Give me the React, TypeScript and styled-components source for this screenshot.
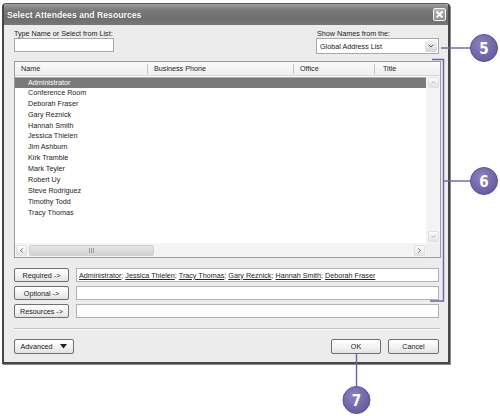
import styled, { createGlobalStyle } from 'styled-components'
import { ChevronDown, ChevronUp, ChevronLeft, ChevronRight } from 'lucide-react'

const GlobalStyle = createGlobalStyle`
  html, body { margin: 0; padding: 0; background: #fff; }
  body { font-family: "Liberation Sans", Arial, sans-serif; color: #222; }
  * { box-sizing: border-box; }
`

const Page = styled.div`
  position: relative;
  width: 500px;
  height: 416px;
  padding: 3px 0 0 2px;
`

const Window = styled.div`
  width: 448px;
  height: 361px;
  border: 2px solid #474747;
  border-top: 1px solid #5c5c5c;
  border-radius: 4px 4px 0 0;
  background: #ececec;
  display: flex;
  flex-direction: column;
  box-shadow: 1px 1px 0 #8a8a8a;
`

const TitleBar = styled.div`
  height: 21px;
  flex: none;
  display: flex;
  align-items: center;
  justify-content: space-between;
  padding: 0 2px 0 3px;
  background: linear-gradient(#9c9c9c, #7a7a7a 30%, #6e6e6e 70%, #777);
  border-radius: 3px 3px 0 0;
`

const Title = styled.span`
  color: #fff;
  font-weight: bold;
  font-size: 8.6px;
  letter-spacing: 0.05px;
  text-shadow: 0 0 1px rgba(0, 0, 0, 0.4);
`

const CloseBox = styled.div`
  width: 13px;
  height: 13px;
  border: 1px solid #f2f2f2;
  border-radius: 2px;
  background: linear-gradient(#b4b4b4, #8e8e8e);
  display: flex;
  align-items: center;
  justify-content: center;
`

const Body = styled.div`
  flex: 1;
  display: flex;
  flex-direction: column;
  padding: 0 7px 0 10px;
`

const TopRow = styled.div`
  margin-top: 4px;
  display: flex;
  justify-content: space-between;
`

const Field = styled.div<{ $width: number; $right?: number }>`
  width: ${p => p.$width}px;
  margin-right: ${p => p.$right ?? 0}px;
  display: flex;
  flex-direction: column;
`

const Label = styled.span<{ $indent?: number }>`
  font-size: 7.2px;
  line-height: 9px;
  padding-left: ${p => p.$indent ?? 0}px;
`

const TextBox = styled.div<{ $height: number }>`
  height: ${p => p.$height}px;
  background: #fff;
  border: 1px solid #a8a8a8;
  display: flex;
  align-items: center;
  padding-left: 3px;
  font-size: 7.2px;
`

const Combo = styled(TextBox)`
  justify-content: space-between;
  padding-right: 1px;
`

const ComboButton = styled.div`
  width: 12px;
  height: 12px;
  border-radius: 2px;
  background: linear-gradient(#f4f4f4, #d6d6d6);
  display: flex;
  align-items: center;
  justify-content: center;
`

const ListBox = styled.div`
  margin-top: 7px;
  height: 197px;
  border: 1px solid #9c9c9c;
  background: #fff;
  display: flex;
  flex-direction: column;
`

const Header = styled.div`
  height: 14px;
  flex: none;
  display: grid;
  grid-template-columns: 133px 146px 81px 1fr;
  align-items: center;
  background: linear-gradient(#fafafa, #f0f0f0);
  border-bottom: 1px solid #d6d6d6;
`

const HeaderCell = styled.div<{ $last?: boolean }>`
  height: 10px;
  line-height: 10px;
  font-size: 7.2px;
  padding-left: ${p => (p.$last ? 8 : 6)}px;
  border-right: ${p => (p.$last ? 'none' : '1px solid #c4c4c4')};
`

const ListArea = styled.div`
  flex: 1;
  display: grid;
  grid-template-columns: 1fr 14px;
  grid-template-rows: 1fr 14px;
`

const Rows = styled.div`
  padding-top: 1px;
  overflow: hidden;
`

const Row = styled.div<{ $selected?: boolean }>`
  height: 10.9px;
  line-height: 10.9px;
  font-size: 7.2px;
  padding-left: 13px;
  color: ${p => (p.$selected ? '#fff' : '#1c1c1c')};
  background: ${p => (p.$selected ? '#7a7a7a' : 'transparent')};
  border-top: ${p => (p.$selected ? '1px solid #aaa' : 'none')};
`

const VScroll = styled.div`
  background: #f4f4f4;
  display: flex;
  flex-direction: column;
  justify-content: space-between;
  padding: 1px 0;
`

const HScroll = styled.div`
  background: #f4f4f4;
  display: flex;
  align-items: center;
  padding: 0 1px;
  gap: 2px;
`

const ArrowBtn = styled.div`
  width: 11px;
  height: 11px;
  margin: 0 auto;
  flex: none;
  border-radius: 2px;
  background: linear-gradient(#fbfbfb, #e4e4e4);
  border: 1px solid #e0e0e0;
  display: flex;
  align-items: center;
  justify-content: center;
`

const Thumb = styled.div<{ $width: number }>`
  width: ${p => p.$width}px;
  height: 11px;
  border-radius: 2px;
  background: linear-gradient(#e6e6e6, #d2d2d2);
  border: 1px solid #d0d0d0;
  display: flex;
  align-items: center;
  justify-content: center;
`

const Spacer = styled.div`
  flex: 1;
`

const Corner = styled.div`
  background: #efefef;
`

const Recipients = styled.div`
  margin-top: 10px;
  display: flex;
  flex-direction: column;
  gap: 4px;
`

const RecipientRow = styled.div`
  display: flex;
  gap: 7px;
  height: 14px;
  padding-right: 2px;
`

const Button = styled.div<{ $width: number }>`
  width: ${p => p.$width}px;
  height: 100%;
  flex: none;
  border: 1px solid #6f6f6f;
  border-radius: 2px;
  background: linear-gradient(#ffffff, #f1f1f1 60%, #e2e2e2);
  font-size: 7.2px;
  display: flex;
  align-items: center;
  justify-content: center;
  gap: 8px;
  color: #222;
`

const RecipientField = styled.div`
  flex: 1;
  background: #fff;
  border: 1px solid #b0b0b0;
  font-size: 7.2px;
  display: flex;
  align-items: center;
  padding-left: 2px;
  white-space: pre;
`

const Name = styled.span`
  text-decoration: underline;
`

const Separator = styled.div`
  margin-top: 10px;
  margin-right: 1px;
  height: 2px;
  border-top: 1px solid #c2c2c2;
  border-bottom: 1px solid #fbfbfb;
`

const Footer = styled.div`
  margin-top: 9px;
  height: 15px;
  display: flex;
  gap: 7px;
  padding-right: 2px;
`

const Callouts = styled.svg`
  position: absolute;
  left: 0;
  top: 0;
  pointer-events: none;
`

const people = [
  'Administrator',
  'Conference Room',
  'Deborah Fraser',
  'Gary Reznick',
  'Hannah Smith',
  'Jessica Thielen',
  'Jim Ashburn',
  'Kirk Tramble',
  'Mark Teyler',
  'Robert Uy',
  'Steve Rodriguez',
  'Timothy Todd',
  'Tracy Thomas',
]

const required = ['Administrator', 'Jessica Thielen', 'Tracy Thomas', 'Gary Reznick', 'Hannah Smith', 'Deborah Fraser']

const Bubble = ({ x, y, n }: { x: number; y: number; n: string }) => (
  <g>
    <circle cx={x} cy={y} r={13.5} fill="url(#bubble)" stroke="#5b5296" strokeWidth={1} />
    <text
      x={x}
      y={y + 5.5}
      textAnchor="middle"
      fill="#fff"
      fontSize="15"
      fontWeight="bold"
      fontFamily='"DejaVu Sans Condensed", "Liberation Sans Narrow", sans-serif'
    >
      {n}
    </text>
  </g>
)

export default function App() {
  return (
    <Page>
      <GlobalStyle />
      <Window>
        <TitleBar>
          <Title>Select Attendees and Resources</Title>
          <CloseBox>
            <svg width="9" height="9" viewBox="0 0 9 9">
              <path d="M1.5 1.5 L7.5 7.5 M7.5 1.5 L1.5 7.5" stroke="#fff" strokeWidth="1.8" />
            </svg>
          </CloseBox>
        </TitleBar>
        <Body>
          <TopRow>
            <Field $width={100}>
              <Label>Type Name or Select from List:</Label>
              <TextBox $height={14} />
            </Field>
            <Field $width={123} $right={2}>
              <Label $indent={1}>Show Names from the:</Label>
              <Combo $height={16}>
                Global Address List
                <ComboButton>
                  <ChevronDown size={8} color="#555" strokeWidth={3} />
                </ComboButton>
              </Combo>
            </Field>
          </TopRow>

          <ListBox>
            <Header>
              <HeaderCell>Name</HeaderCell>
              <HeaderCell>Business Phone</HeaderCell>
              <HeaderCell>Office</HeaderCell>
              <HeaderCell $last>Title</HeaderCell>
            </Header>
            <ListArea>
              <Rows>
                {people.map((p, i) => (
                  <Row key={p} $selected={i === 0}>
                    {p}
                  </Row>
                ))}
              </Rows>
              <VScroll>
                <ArrowBtn>
                  <ChevronUp size={7} color="#aaa" strokeWidth={3} />
                </ArrowBtn>
                <ArrowBtn>
                  <ChevronDown size={7} color="#aaa" strokeWidth={3} />
                </ArrowBtn>
              </VScroll>
              <HScroll>
                <ArrowBtn>
                  <ChevronLeft size={7} color="#555" strokeWidth={3} />
                </ArrowBtn>
                <Thumb $width={125}>
                  <svg width="5" height="5" viewBox="0 0 5 5">
                    <path d="M0.5 0 V5 M2.5 0 V5 M4.5 0 V5" stroke="#9a9a9a" strokeWidth="1" />
                  </svg>
                </Thumb>
                <Spacer />
                <ArrowBtn>
                  <ChevronRight size={7} color="#555" strokeWidth={3} />
                </ArrowBtn>
              </HScroll>
              <Corner />
            </ListArea>
          </ListBox>

          <Recipients>
            <RecipientRow>
              <Button $width={55}>Required -&gt;</Button>
              <RecipientField>
                {required.map((n, i) => (
                  <span key={n}>
                    <Name>{n}</Name>
                    {i < required.length - 1 ? '; ' : ''}
                  </span>
                ))}
              </RecipientField>
            </RecipientRow>
            <RecipientRow>
              <Button $width={55}>Optional -&gt;</Button>
              <RecipientField />
            </RecipientRow>
            <RecipientRow>
              <Button $width={55}>Resources -&gt;</Button>
              <RecipientField />
            </RecipientRow>
          </Recipients>

          <Separator />

          <Footer>
            <Button $width={60}>
              Advanced
              <svg width="7" height="5" viewBox="0 0 7 5">
                <path d="M0 0 H7 L3.5 4.5 Z" fill="#222" />
              </svg>
            </Button>
            <Spacer />
            <Button $width={50}>OK</Button>
            <Button $width={51}>Cancel</Button>
          </Footer>
        </Body>
      </Window>

      <Callouts width="500" height="416" viewBox="0 0 500 416">
        <defs>
          <radialGradient id="bubble" cx="0.4" cy="0.35" r="0.7">
            <stop offset="0" stopColor="#8a82c0" />
            <stop offset="1" stopColor="#635a9e" />
          </radialGradient>
        </defs>
        <g stroke="#6a62a8" strokeWidth="1.4" fill="none">
          <path d="M441 48 H471" />
          <path d="M432 59.5 H443.5 V301 H430" />
          <path d="M443.5 181 H471" />
          <path d="M356.5 354 V387" />
        </g>
        <Bubble x={484} y={48} n="5" />
        <Bubble x={484} y={181} n="6" />
        <Bubble x={356.5} y={400} n="7" />
      </Callouts>
    </Page>
  )
}
